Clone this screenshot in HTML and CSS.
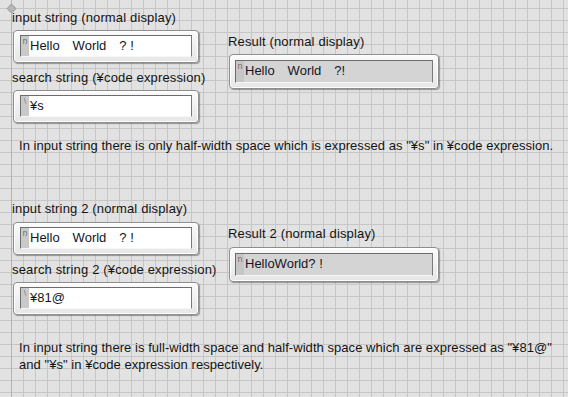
FILE: index.html
```html
<!DOCTYPE html>
<html lang="en">
<head>
	<meta charset="UTF-8">
	<link rel="stylesheet" href="styles.css">
	<title>Search and Replace</title>
</head>
<body>
	<div class="panel">
		<span class="origin"></span>
		<div class="group">
			<div class="col-left">
				<div class="label">input string (normal display)</div>
				<div class="ctrl">
					<div class="field"><span class="mark">n</span><span class="val">Hello　World　? !</span></div>
				</div>
				<div class="label">search string (¥code expression)</div>
				<div class="ctrl">
					<div class="field"><span class="mark mark-code">\</span><span class="val">¥s</span></div>
				</div>
			</div>
			<div class="col-right">
				<div class="label">Result (normal display)</div>
				<div class="ctrl ind">
					<div class="field"><span class="mark">n</span><span class="val">Hello　World　?!</span></div>
				</div>
			</div>
		</div>
		<p class="note">In input string there is only half-width space which is expressed as "¥s" in ¥code expression.</p>

		<div class="group group-2">
			<div class="col-left">
				<div class="label">input string 2 (normal display)</div>
				<div class="ctrl">
					<div class="field"><span class="mark">n</span><span class="val">Hello　World　? !</span></div>
				</div>
				<div class="label">search string 2 (¥code expression)</div>
				<div class="ctrl">
					<div class="field"><span class="mark mark-code">\</span><span class="val">¥81@</span></div>
				</div>
			</div>
			<div class="col-right">
				<div class="label">Result 2 (normal display)</div>
				<div class="ctrl ind">
					<div class="field"><span class="mark">n</span><span class="val">HelloWorld? !</span></div>
				</div>
			</div>
		</div>
		<p class="note note-2">In input string there is full-width space and half-width space which are expressed as "¥81@"<br>and "¥s" in ¥code expression respectively.</p>
	</div>
</body>
</html>
```

FILE: styles.css
```css
body {
	margin: 0;
	padding: 0;
	font-family: 'Liberation Sans', 'Noto Sans CJK JP', sans-serif;
	font-size: 13px;
	color: #141414;
	background-color: #e2e2e2;
	background-image:
		linear-gradient(to right, #b4b4b4 1px, transparent 1px),
		linear-gradient(to right, #c6c6c6 1px, transparent 1px),
		linear-gradient(to bottom, #c6c6c6 1px, transparent 1px);
	background-size: 12px 100%, 12px 12px, 12px 12px;
	background-repeat: no-repeat, repeat, repeat;
	background-position: 11px 0, 11px 0, 0 8px;
	height: 397px;
	overflow: hidden;
}

.panel {
	position: relative;
	padding: 10px 0 0 12px;
}

.origin {
	position: absolute;
	left: 8px;
	top: 5px;
	width: 5px;
	height: 5px;
	background: #b8b8b8;
	border: 1px solid #a4a4a4;
	transform: rotate(45deg);
}

.group {
	display: flex;
	align-items: flex-start;
}

.col-left {
	width: 188px;
}

.col-right {
	margin-left: 28px;
	margin-top: 24px;
}

.label {
	line-height: 16px;
	height: 16px;
	margin-bottom: 4px;
	white-space: nowrap;
	letter-spacing: .15px;
}

.ctrl {
	margin-left: 1px;
	width: 186px;
	box-sizing: border-box;
	border: 1px solid #8e8e8e;
	border-radius: 4px;
	background: linear-gradient(#fbfbfb, #e6e6e6);
	box-shadow: 1px 1px 1px rgba(0, 0, 0, .35), inset 0 0 0 1px #fff;
	padding: 4px 6px 5px 6px;
	margin-bottom: 7px;
}

.ctrl.ind {
	width: 210px;
	padding: 5px 5px 5px 5px;
}

.field {
	display: flex;
	height: 22px;
	box-sizing: border-box;
	border: 1px solid;
	border-color: #6c6c6c #7a7a7a #f6f6f6 #6c6c6c;
	background: #fff;
}

.ind .field {
	background: #d4d4d4;
	height: 23px;
}

.mark {
	width: 8px;
	flex: none;
	background: #c9c9c9;
	color: #6f6f6f;
	font-size: 8px;
	line-height: 11px;
	text-align: center;
	font-family: 'DejaVu Sans', sans-serif;
}

.ind .mark {
	background: #c6c6c6;
}

.mark-code {
	font-size: 7px;
}

.val {
	padding-left: 1px;
	line-height: 19px;
	white-space: pre;
	color: #141428;
}

.note {
	margin: 7px 0 0 7px;
	line-height: 17px;
	white-space: nowrap;
	letter-spacing: .05px;
}

.group-2 {
	margin-top: 47px;
}

.group-2 .label:first-child {
	margin-bottom: 5px;
}

.group-2 .col-right {
	margin-top: 25px;
}

.note-2 {
	margin-top: 17px;
}
```
